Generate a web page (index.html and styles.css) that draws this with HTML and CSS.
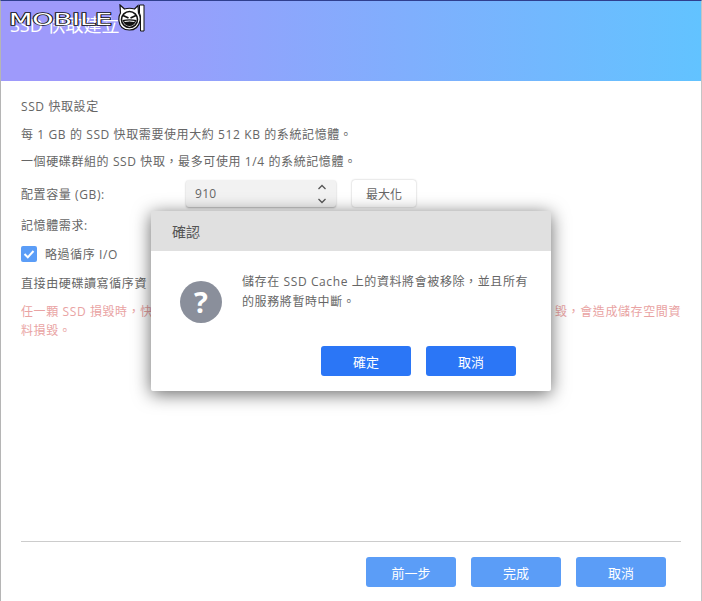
FILE: index.html
```html
<!DOCTYPE html>
<html lang="zh-Hant">
<head>
  <meta charset="UTF-8"/>
  <title>SSD 快取建立</title>
  <link rel="stylesheet" href="styles.css">
</head>
<body>
<div class="window">
  <header class="banner">
    <h1>SSD 快取建立</h1>
    <!-- watermark over the banner -->
    <div class="logo">
      <span class="logo-text">MOBILE</span>
      <svg class="logo-mark" width="29" height="28" viewBox="0 0 29 28">
        <path d="M4 1 L8.500 5 Q13.500 3.500 18.500 5 L22 1.500 L22.500 9 Q25 13 24 17 Q22 26 13.500 26 Q4 26 3 17 Q2.500 12 4.500 9 Z" fill="#fff" stroke="#111" stroke-width="1.200"/>
        <circle cx="13.500" cy="15.500" r="8" fill="none" stroke="#111" stroke-width="1.600"/>
        <path d="M7 11.500 L12.500 14 M20 11.500 L14.500 14" stroke="#111" stroke-width="1.800"/>
        <path d="M6.500 16 Q13.500 14.500 20.500 16 Q18.500 22 13.500 22 Q8.500 22 6.500 16 Z" fill="#111"/>
        <path d="M8.500 17.500 Q13.500 16.500 18.500 17.500" fill="none" stroke="#fff" stroke-width="1"/>
        <path d="M23.500 1 H28 V27 H24.500 V12 L23.500 9 Z" fill="#fff" stroke="#111" stroke-width="1"/>
      </svg>
    </div>
  </header>

  <main class="content">
    <p class="line">SSD 快取設定</p>
    <p class="line second">每 1 GB 的 SSD 快取需要使用大約 512 KB 的系統記憶體。</p>
    <p class="line">一個硬碟群組的 SSD 快取，最多可使用 1/4 的系統記憶體。</p>

    <div class="field">
      <label class="field-label">配置容量 (GB):</label>
      <div class="spinner">
        <span>910</span>
        <svg width="10" height="24" viewBox="0 0 10 24" fill="none" stroke="#555" stroke-width="1.300">
          <path d="M1.500 7 L5 3.500 L8.500 7"/>
          <path d="M1.500 17 L5 20.500 L8.500 17"/>
        </svg>
      </div>
      <button class="btn-light">最大化</button>
    </div>

    <p class="line mem">記憶體需求:</p>

    <div class="check-row">
      <span class="checkbox">
        <svg width="16" height="16" viewBox="0 0 16 16" fill="none" stroke="#fff" stroke-width="2">
          <path d="M3.500 8 L6.800 11.300 L12.500 5"/>
        </svg>
      </span>
      <span>略過循序 I/O</span>
    </div>

    <!-- the dialog hides the middle of these lines, only what shows is kept -->
    <p class="line direct">直接由硬碟讀寫循序資</p>
    <div class="warn">
      <p class="warn-split"><span>任一顆 SSD 損毀時，快</span><span>毀，會造成儲存空間資</span></p>
      <p>料損毀。</p>
    </div>
  </main>

  <footer class="actions">
    <button class="btn-soft">前一步</button>
    <button class="btn-soft">完成</button>
    <button class="btn-soft">取消</button>
  </footer>
</div>

<!-- Confirm dialog -->
<div class="dialog">
  <div class="dialog-title">確認</div>
  <div class="dialog-body">
    <span class="question">?</span>
    <p>儲存在 SSD Cache 上的資料將會被移除，並且所有的服務將暫時中斷。</p>
  </div>
  <div class="dialog-actions">
    <button class="btn-primary">確定</button>
    <button class="btn-primary">取消</button>
  </div>
</div>
</body>
</html>
```

FILE: styles.css
```css
*{margin:0;padding:0;box-sizing:border-box;font-family:"Open Sans","Noto Sans CJK TC",sans-serif}
html,body{height:601px;overflow:hidden;background:#fff}
body{color:#666;font-size:12px}

.window{display:flex;flex-direction:column;height:601px;border-left:1px solid #b5b5b5;border-right:1px solid #c4c4c4;border-top:1px solid #2f3f8f}

.banner{height:80px;background:linear-gradient(90deg,#9e9afb 0%,#9e9afb 15%,#62c3ff 100%);padding:14px 9px}
.banner h1{font-size:18px;font-weight:400;color:#fff;line-height:20px}

.logo{position:absolute;left:9px;top:4px;display:flex;align-items:center;height:28px}
.logo-text{display:block;width:107px;font-family:"DejaVu Sans",sans-serif;font-size:15px;line-height:20px;margin-top:3px;color:#fff;-webkit-text-stroke:1.300px #111;paint-order:stroke fill;transform:scaleX(1.800);transform-origin:left center}

.content{flex:1;padding:0 20px}
.line{line-height:18px;letter-spacing:.6px;margin-top:9px}
.line:first-child{margin-top:17px}
.second{margin-top:10px}

.field{display:flex;align-items:center;height:27px;margin-top:9px}
.field-label{width:165px;letter-spacing:.6px}
.spinner{width:150px;height:27px;background:#f2f2f2;border-radius:3px;box-shadow:0 1px 2px rgba(0,0,0,.3);display:flex;align-items:center;justify-content:space-between;padding:0 9px;letter-spacing:.3px}
.btn-light{margin-left:16px;width:64px;height:27px;background:#fff;border:none;border-radius:3px;box-shadow:0 0 2px rgba(0,0,0,.3);color:#666;font-size:12px}

.mem{margin-top:10px}
.check-row{display:flex;align-items:center;gap:8px;height:18px;margin-top:10px;letter-spacing:.6px}
.checkbox{width:16px;height:16px;border-radius:2px;background:#5b9df7;display:block}
.checkbox svg{display:block}
.direct{margin-top:12px}
.warn{color:#e9a3a3;line-height:19px;letter-spacing:.6px;margin-top:9px}
.warn-split{display:flex;justify-content:space-between}

.actions{margin:0 20px;height:60px;border-top:1px solid #ccc;display:flex;justify-content:flex-end;gap:15px;padding:15px 15px 0 0}
.btn-soft,.btn-primary{width:90px;height:30px;border:none;border-radius:3px;color:#fff;font-size:13px}
.btn-soft{background:#5b9df7}
.btn-primary{background:#2b76f6}

.dialog{position:absolute;left:151px;top:211px;width:400px;height:180px;background:#fff;border-radius:2px;box-shadow:0 3px 18px rgba(0,0,0,.6);display:flex;flex-direction:column}
.dialog-title{height:40px;background:#e0e0e0;padding-left:21px;font-size:14px;line-height:42px;color:#555}
.dialog-body{display:flex;gap:20px;padding:21px 15px 0 29px;height:95px}
.dialog-body p{width:294px;line-height:20px;letter-spacing:.6px}
.question{flex:none;width:42px;height:42px;margin-top:9px;border-radius:50%;background:#8a8f9b;color:#fff;font-size:29px;font-weight:700;line-height:42px;text-align:center}
.dialog-actions{display:flex;gap:15px;padding-left:170px}
```
